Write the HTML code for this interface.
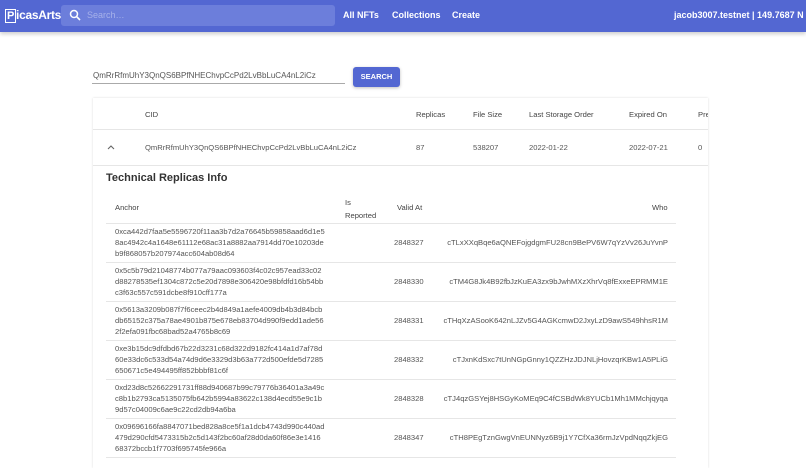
<!DOCTYPE html>
<html><head><meta charset="utf-8"><style>
*{margin:0;padding:0;box-sizing:border-box}
body{width:806px;height:458px;overflow:hidden;background:#fff;font-family:"Liberation Sans",sans-serif;position:relative;color:#333}
.a{position:absolute;white-space:nowrap}
.nav{position:absolute;left:0;top:0;width:806px;height:32px;background:#5367d2;box-shadow:0 2px 4px rgba(0,0,0,.2)}
.nav .l{color:#fff;font-weight:bold;font-size:9px;top:10px}
.h{font-size:7.6px;color:#444}
.c{font-size:7.6px;color:#555}
.line{position:absolute;height:1px;background:#e6e6e6}
.anc{font-size:7.6px;color:#555;line-height:11.2px;left:115px}
</style></head><body>
<div class="nav">
<div class="a" style="left:5px;top:8px;color:#fff;font-size:12px;font-weight:bold;letter-spacing:-0.3px"><span style="border:1.5px solid #fff;padding:0 1px;font-size:11px">P</span>icasArts</div>
<div class="a" style="left:61px;top:5px;width:274px;height:21px;background:#6c7edb;border-radius:3px"></div>
<svg class="a" style="left:69px;top:9px" width="12" height="12" viewBox="0 0 12 12"><circle cx="5" cy="5" r="3.5" stroke="#fff" stroke-width="1.5" fill="none"/><path d="M7.6 7.6L11 11" stroke="#fff" stroke-width="1.6"/></svg>
<div class="a" style="left:87px;top:10px;font-size:9px;color:#a6b1ea">Search…</div>
<div class="a l" style="left:343px">All NFTs</div>
<div class="a l" style="left:392px">Collections</div>
<div class="a l" style="left:452px">Create</div>
<div class="a l" style="left:674px">jacob3007.testnet | 149.7687 N</div>
</div>
<div class="a" style="left:93px;top:71px;font-size:8px;color:#555">QmRrRfmUhY3QnQS6BPfNHEChvpCcPd2LvBbLuCA4nL2iCz</div>
<div class="a" style="left:92px;top:83px;width:253px;height:1px;background:#aaa"></div>
<div class="a" style="left:353px;top:67px;width:47px;height:20px;background:#5367d2;border-radius:3px;color:#fff;font-size:7.5px;font-weight:bold;text-align:center;line-height:20px;box-shadow:0 1px 3px rgba(0,0,0,.25)">SEARCH</div>
<div class="a" style="left:93px;top:98px;width:615px;height:370px;box-shadow:0 0 2px rgba(0,0,0,.15)"></div>
<div class="a h" style="left:145px;top:110px">CID</div>
<div class="a h" style="left:416px;top:110px">Replicas</div>
<div class="a h" style="left:473px;top:110px">File Size</div>
<div class="a h" style="left:529px;top:110px">Last Storage Order</div>
<div class="a h" style="left:629px;top:110px">Expired On</div>
<div class="a h" style="left:698px;top:110px;width:10px;overflow:hidden">Pre</div>
<div class="line" style="left:93px;top:129px;width:615px"></div>
<svg class="a" style="left:107px;top:144px" width="8" height="6" viewBox="0 0 8 6"><path d="M1 5L4 2L7 5" stroke="#666" stroke-width="1.1" fill="none"/></svg>
<div class="a c" style="left:145px;top:143px">QmRrRfmUhY3QnQS6BPfNHEChvpCcPd2LvBbLuCA4nL2iCz</div>
<div class="a c" style="left:416px;top:143px">87</div>
<div class="a c" style="left:473px;top:143px">538207</div>
<div class="a c" style="left:529px;top:143px">2022-01-22</div>
<div class="a c" style="left:629px;top:143px">2022-07-21</div>
<div class="a c" style="left:698px;top:143px">0</div>
<div class="line" style="left:93px;top:165px;width:615px"></div>
<div class="a" style="left:106px;top:172px;font-size:11px;font-weight:bold;color:#333">Technical Replicas Info</div>
<div class="a h" style="left:115px;top:203px">Anchor</div>
<div class="a h" style="left:345px;top:196px;line-height:13px;white-space:normal">Is<br>Reported</div>
<div class="a h" style="left:397px;top:203px">Valid At</div>
<div class="a h" style="left:652px;top:203px">Who</div>
<div class="line" style="left:106px;top:223px;width:570px"></div>

<div class="a anc" style="top:226px">0xca442d7faa5e5596720f11aa3b7d2a76645b59858aad6d1e5<br>8ac4942c4a1648e61112e68ac31a8882aa7914dd70e10203de<br>b9f868057b207974acc604ab08d64</div>
<div class="a c" style="left:394px;top:238px">2848327</div>
<div class="a c" style="right:138px;top:238px">cTLxXXqBqe6aQNEFojgdgmFU28cn9BePV6W7qYzVv26JuYvnP</div>
<div class="line" style="left:106px;top:262px;width:570px"></div>

<div class="a anc" style="top:265px">0x5c5b79d21048774b077a79aac093603f4c02c957ead33c02<br>d88278535ef1304c872c5e20d7898e306420e98bfdfd16b54bb<br>c3f63c557c591dcbe8f910cff177a</div>
<div class="a c" style="left:394px;top:277px">2848330</div>
<div class="a c" style="right:138px;top:277px">cTM4G8Jk4B92fbJzKuEA3zx9bJwhMXzXhrVq8fExxeEPRMM1E</div>
<div class="line" style="left:106px;top:301px;width:570px"></div>

<div class="a anc" style="top:304px">0x5613a3209b087f7f6ceec2b4d849a1aefe4009db4b3d84bcb<br>db65152c375a78ae4901b875e678eb83704d990f9edd1ade56<br>2f2efa091fbc68bad52a4765b8c69</div>
<div class="a c" style="left:394px;top:316px">2848331</div>
<div class="a c" style="right:138px;top:316px">cTHqXzASooK642nLJZv5G4AGKcmwD2JxyLzD9awS549hhsR1M</div>
<div class="line" style="left:106px;top:340px;width:570px"></div>

<div class="a anc" style="top:343px">0xe3b15dc9dfdbd67b22d3231c68d322d9182fc414a1d7af78d<br>60e33dc6c533d54a74d9d6e3329d3b63a772d500efde5d7285<br>650671c5e494495ff852bbbf81c6f</div>
<div class="a c" style="left:394px;top:355px">2848332</div>
<div class="a c" style="right:138px;top:355px">cTJxnKdSxc7tUnNGpGnny1QZZHzJDJNLjHovzqrKBw1A5PLiG</div>
<div class="line" style="left:106px;top:379px;width:570px"></div>

<div class="a anc" style="top:382px">0xd23d8c52662291731ff88d940687b99c79776b36401a3a49c<br>c8b1b2793ca5135075fb642b5994a83622c138d4ecd55e9c1b<br>9d57c04009c6ae9c22cd2db94a6ba</div>
<div class="a c" style="left:394px;top:394px">2848328</div>
<div class="a c" style="right:138px;top:394px">cTJ4qzGSYej8HSGyKoMEq9C4fCSBdWk8YUCb1Mh1MMchjqyqa</div>
<div class="line" style="left:106px;top:418px;width:570px"></div>

<div class="a anc" style="top:421px">0x09696166fa8847071bed828a8ce5f1a1dcb4743d990c440ad<br>479d290cfd5473315b2c5d143f2bc60af28d0da60f86e3e1416<br>68372bccb1f7703f695745fe966a</div>
<div class="a c" style="left:394px;top:433px">2848347</div>
<div class="a c" style="right:138px;top:433px">cTH8PEgTznGwgVnEUNNyz6B9j1Y7CfXa36rmJzVpdNqqZkjEG</div>
<div class="line" style="left:106px;top:457px;width:570px"></div>
</body></html>
